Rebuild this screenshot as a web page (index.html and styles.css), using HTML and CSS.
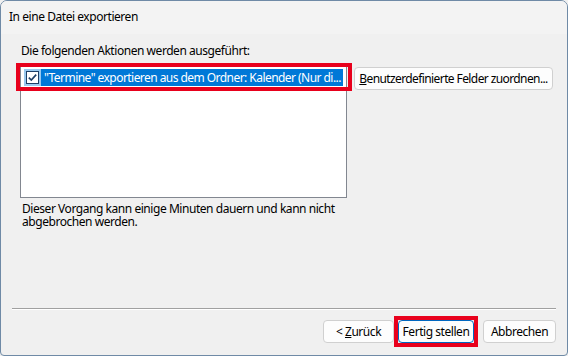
FILE: index.html
```html
<!DOCTYPE html>
<html lang="de">
  <head>
    <meta charset="utf-8">
    <title>In eine Datei exportieren</title>
    <link rel="stylesheet" href="styles.css">
  </head>
  <body>
    <div class="window">
      <header class="titlebar">In eine Datei exportieren</header>

      <main class="content">
        <p class="label">Die folgenden Aktionen werden ausgeführt:</p>

        <div class="actions">
          <div class="listbox">
            <div class="row selected">
              <span class="check">
                <svg width="13" height="13" viewBox="0 0 13 13">
                  <rect x="0.5" y="0.5" width="12" height="12" fill="#fff" stroke="#1d3f66"/>
                  <path d="M2.8 6.6 L5.3 9.1 L10.2 3.6" fill="none" stroke="#1d3f66" stroke-width="1.6"/>
                </svg>
              </span>
              <span class="row-text">"Termine" exportieren aus dem Ordner: Kalender (Nur di...</span>
            </div>
            <span class="mark mark-row"></span>
          </div>
          <button class="btn map-btn"><u>B</u>enutzerdefinierte Felder zuordnen...</button>
        </div>

        <p class="note">Dieser Vorgang kann einige Minuten dauern und kann nicht abgebrochen werden.</p>
      </main>

      <footer class="footer">
        <hr class="sep">
        <div class="buttons">
          <button class="btn">&lt; <u>Z</u>urück</button>
          <span class="marked">
            <button class="btn default">Fertig stellen</button>
          </span>
          <button class="btn cancel">Abbrechen</button>
        </div>
      </footer>
    </div>
  </body>
</html>
```

FILE: styles.css
```css
html {
  font-family: "Noto Sans", "Open Sans", sans-serif;
  font-size: 12px;
  letter-spacing: -0.45px;
}

body {
  margin: 0;
  background-color: #f0f0f0;
}

.window {
  height: 356px;
  box-sizing: border-box;
  border: 1px solid #6f8aa6;
  border-radius: 7px 7px 4px 4px;
  background-color: #f0f0f0;
  display: flex;
  flex-direction: column;
  overflow: hidden;
  color: #000;
}

.titlebar {
  height: 33px;
  padding-left: 8px;
  line-height: 32px;
  background-color: #f3f3f3;
}

.content {
  flex: 1;
  padding: 8px 0 0 19px;
}

.label {
  margin: 0 0 6px 1px;
}

.actions {
  display: flex;
  gap: 7px;
  align-items: flex-start;
}

.listbox {
  position: relative;
  width: 327px;
  height: 133px;
  box-sizing: border-box;
  border: 1px solid #828790;
  background-color: #fff;
  padding: 3px 3px 0 3px;
}

.row {
  display: flex;
  align-items: center;
  height: 17px;
}

.selected .check {
  display: flex;
  align-items: center;
  justify-content: center;
  width: 17px;
  height: 17px;
  background-color: #99c9ef;
}

.row-text {
  flex: 1;
  height: 17px;
  line-height: 17px;
  padding-left: 3px;
  background-color: #0078d7;
  color: #fff;
  white-space: nowrap;
  overflow: hidden;
  letter-spacing: -0.55px;
}

/* red annotation frames drawn over the dialog */
.mark {
  position: absolute;
  border: 4px solid #e8001c;
  pointer-events: none;
}

.mark-row {
  left: -5px;
  top: -3px;
  width: 328px;
  height: 20px;
}

.btn {
  font-family: inherit;
  font-size: 12px;
  letter-spacing: inherit;
  white-space: nowrap;
  flex-shrink: 0;
  height: 23px;
  padding: 0 4px;
  border: 1px solid #d0d0d0;
  border-radius: 4px;
  background-color: #fdfdfd;
  color: #000;
}

.map-btn {
  margin-top: 2px;
  width: 199px;
  padding: 0 2px;
  letter-spacing: -0.6px;
}

.note {
  width: 330px;
  margin: 4px 0 0 2px;
  line-height: 13px;
}

.footer {
  padding: 0 11px 8px 11px;
}

.sep {
  margin: 0 0 6px 0;
  border: none;
  border-top: 1px solid #a0a0a0;
  border-bottom: 1px solid #fff;
}

.buttons {
  display: flex;
  justify-content: flex-end;
  align-items: center;
}

.buttons .btn {
  width: 71px;
}

.buttons .btn.default {
  width: 76px;
  border: 1px solid #0067c0;
  padding: 0 2px;
}

.buttons .btn.cancel {
  width: 73px;
}

.marked {
  display: flex;
  flex-shrink: 0;
  border: 4px solid #e8001c;
  margin: 0 5px 0 0;
}
```
